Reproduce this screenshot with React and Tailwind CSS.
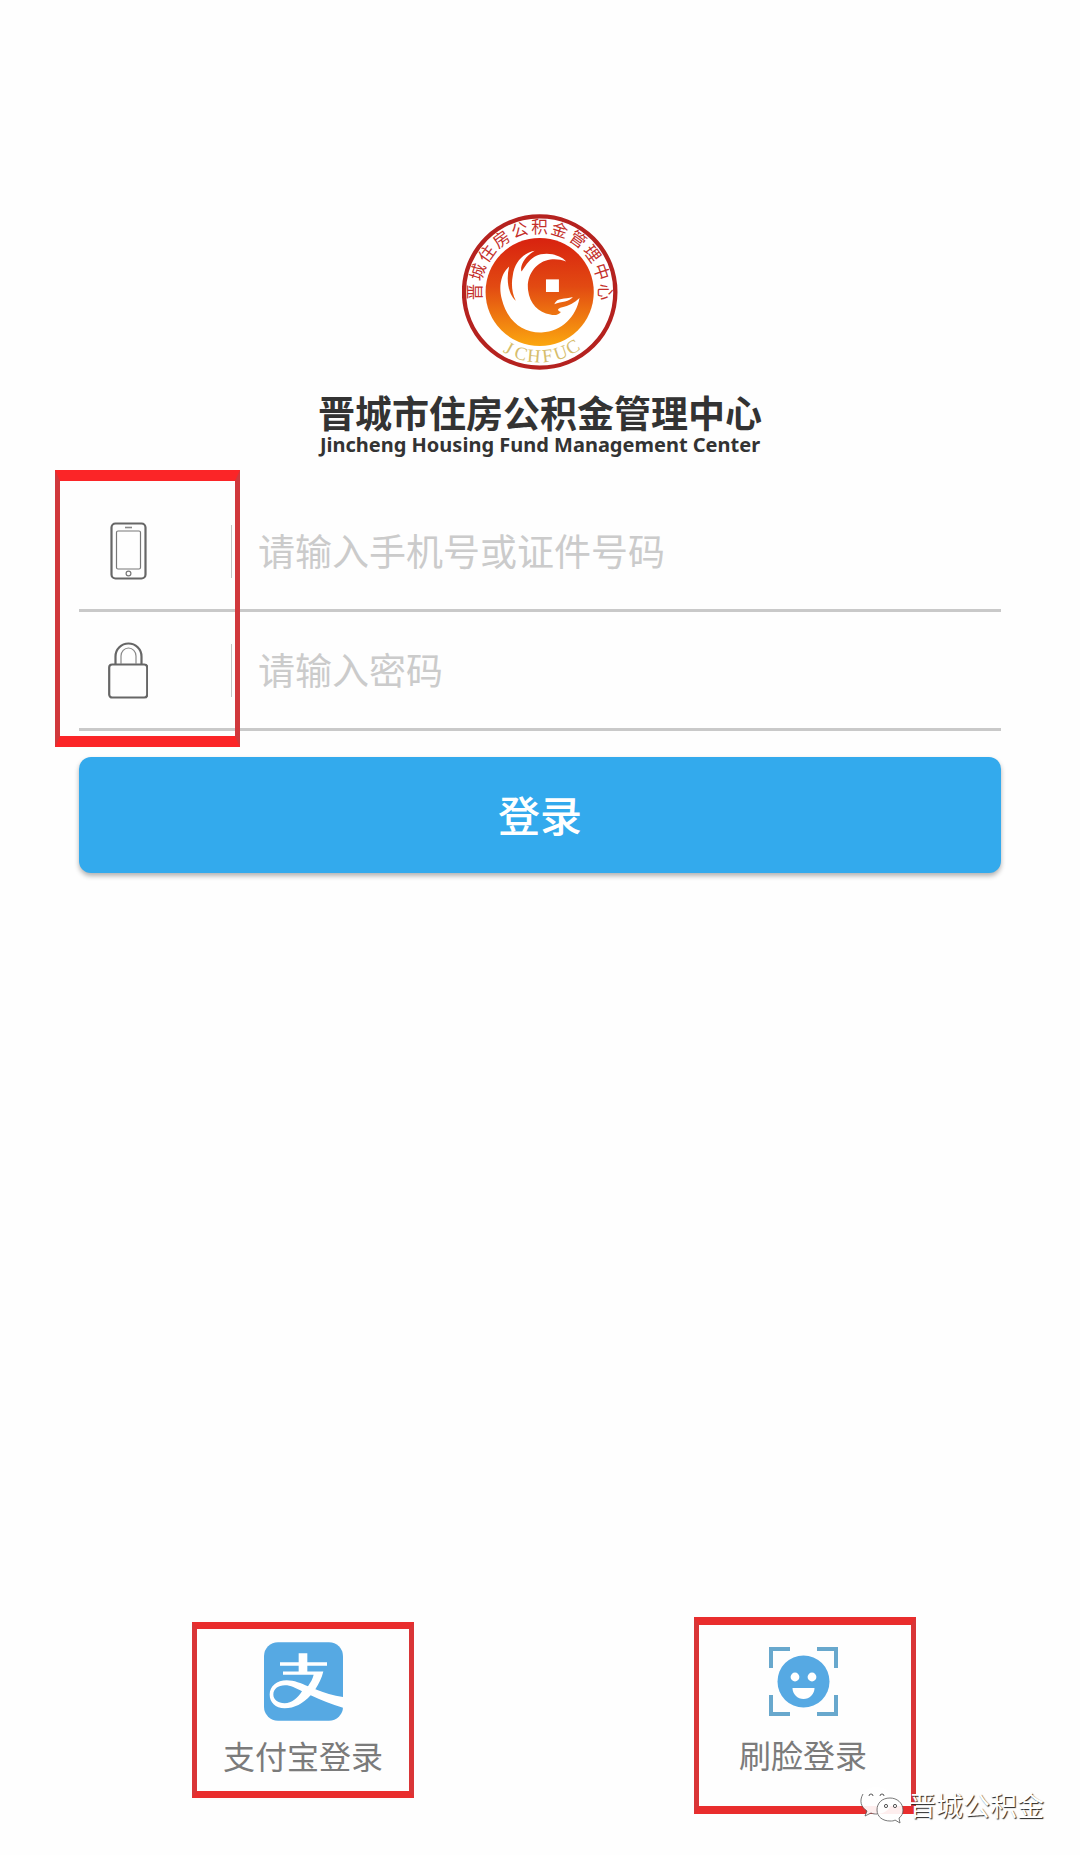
const RING_CHARS = [...'晋城住房公积金管理中心'];
const RING_LETTERS = [...'JCHFUC'];

function CenterLogo() {
  return (
    <svg viewBox="64 41 470 470" className="w-[156px] h-[156px]" role="img" aria-label="晋城市住房公积金管理中心">
      <defs>
        <linearGradient id="sun" x1="0" y1="0" x2="0" y2="1">
          <stop offset="0" stopColor="#d8220f" />
          <stop offset="0.45" stopColor="#e24a12" />
          <stop offset="1" stopColor="#fba70f" />
        </linearGradient>
      </defs>
      <circle cx="298" cy="276" r="228" fill="#fff" stroke="#b5221f" strokeWidth="13" />
      <circle cx="298" cy="276" r="163" fill="url(#sun)" />

      {/* Phoenix */}
      <path
        fill="#fff"
        d="M378 184 C352 156 300 154 276 174 C258 188 250 206 243 214 C238 196 254 168 283 152 C244 160 222 190 217 226 C212 250 214 280 226 302 C204 284 196 240 206 199 C180 222 174 262 184 298 C200 362 246 400 304 398 C366 394 408 350 418 294 C404 308 384 318 366 322 C350 326 350 332 362 336 C356 344 344 348 330 344 C294 338 268 312 263 270 C258 226 286 184 330 178 C346 176 362 178 378 184 Z"
      />
      <path fill="#fff" d="M342 313 C352 290 372 300 398 291 C388 306 364 304 342 313 Z" />
      <rect x="317" y="238" width="39" height="38" fill="#fff" />

      {/* Ring lettering */}
      {RING_CHARS.map((char, i) => (
        <text
          key={i}
          x="298"
          y="98"
          textAnchor="middle"
          fontSize="50"
          fill="#c4302b"
          transform={`rotate(${-90 + i * 18} 298 276)`}
          className="font-['Noto_Sans_CJK_SC',sans-serif]"
        >{char}</text>
      ))}
      {RING_LETTERS.map((char, i) => (
        <text
          key={i}
          x="298"
          y="488"
          textAnchor="middle"
          fontSize="56"
          fill="#d6bd6c"
          transform={`rotate(${29 - i * 12} 298 276)`}
          className="font-['Liberation_Serif',serif]"
        >{char}</text>
      ))}
    </svg>
  );
}

function PhoneIcon() {
  return (
    <svg viewBox="0 0 40 58" className="w-[40px] h-[58px]" fill="none" aria-hidden="true">
      <rect x="3.5" y="1.5" width="34" height="55" rx="4" stroke="#666" strokeWidth="2.2" />
      <rect x="8.5" y="9" width="24" height="38" rx="1.5" stroke="#777" strokeWidth="1.2" />
      <path d="M17 5.5h7" stroke="#888" strokeWidth="1.6" />
      <circle cx="20.5" cy="51.5" r="2.4" stroke="#777" strokeWidth="1.2" />
    </svg>
  );
}

function LockIcon() {
  return (
    <svg viewBox="0 0 40 58" className="w-[40px] h-[58px]" fill="none" aria-hidden="true">
      <rect x="1.2" y="23.5" width="38" height="33" rx="3" stroke="#666" strokeWidth="2.2" />
      <path d="M7.5 23V15.5a13 13 0 0 1 26 0V23" stroke="#666" strokeWidth="2.2" />
      <path d="M13 23v-8a7.5 8 0 0 1 15 0v8" stroke="#888" strokeWidth="1.2" />
    </svg>
  );
}

function AlipayIcon() {
  return (
    <svg viewBox="249 97 237 236" className="w-[79px] h-[79px]" aria-hidden="true">
      <rect x="249" y="97" width="237" height="236" rx="42" fill="#56a9e3" />
      <path fill="#fff" d="M353 130H379V157H438V168H379V185H427C422 206 413 223 403 238C430 249 458 257 487 262V294C452 283 420 270 389 256C366 281 340 295 311 295C283 295 266 278 266 254C266 228 288 211 317 211C340 211 360 220 381 229C389 218 395 208 398 195H306V185H353V168H297V157H353Z" />
      <path fill="#56a9e3" d="M363 244C344 234 329 226 312 226C291 226 277 237 277 254C277 270 291 280 311 280C332 280 350 264 363 244Z" />
    </svg>
  );
}

function FaceIcon() {
  return (
    <svg viewBox="0 0 69 69" className="w-[69px] h-[69px]" aria-hidden="true">
      <path d="M2 21V2H21M48 2H67V21M67 48V67H48M21 67H2V48" fill="none" stroke="#68a8cd" strokeWidth="4" />
      <circle cx="34.5" cy="34.5" r="26" fill="#56a9e3" />
      <circle cx="26" cy="30" r="4.4" fill="#fff" />
      <circle cx="43" cy="30" r="4.4" fill="#fff" />
      <path d="M23.5 41H45.5A11 11 0 0 1 23.5 41Z" fill="#fff" />
    </svg>
  );
}

function WechatIcon() {
  return (
    <svg viewBox="0 0 44 38" className="w-[44px] h-[38px]" aria-hidden="true">
      <path
        d="M16 1C7 1 1 7 1 14c0 5 2 8 6 11l-2 5 6-3c2 1 4 1 6 1 8 0 15-6 15-14S25 1 16 1Z"
        fill="#fff" fillOpacity="0.92"
      />
      <path d="M3 8C-1 15 1 21 7 25l-2 5 6-3c2 1 4 1 6 1" fill="none" stroke="#555" strokeWidth="0.8" />
      <path
        d="M30 12c-8 0-13 5-13 12s6 11 13 11c2 0 4 0 5-1l5 3-1-5c3-2 4-5 4-8 0-7-6-12-13-12Z"
        fill="#fff" fillOpacity="0.92" stroke="#555" strokeWidth="0.8"
      />
      <g fill="#fff" stroke="#444" strokeWidth="0.9">
        <path d="M9 10a2 2 0 0 1 4 0M20 10a2 2 0 0 1 4 0" />
        <circle cx="26" cy="20" r="1.6" />
        <circle cx="35" cy="20" r="1.6" />
      </g>
    </svg>
  );
}

function Field({ id, type, label, placeholder, icon }) {
  return (
    <div className="flex items-center h-[119px] border-b-3 border-[#c9c9c9]">
      <label
        htmlFor={id}
        aria-label={label}
        className="flex items-center shrink-0 w-[153px] h-[53px] pl-[29px] border-r border-[#c4c4c4]"
      >
        {icon}
      </label>
      <input
        id={id}
        type={type}
        placeholder={placeholder}
        className="flex-1 min-w-0 h-full pl-[26px] pb-[2px] text-[37px] text-gray-700
                   placeholder:text-[#cbcbcb] outline-none"
      />
    </div>
  );
}

export default function App() {
  return (
    <main
      className="relative flex flex-col min-h-screen bg-[#fefefe]
                 font-['Noto_Sans_CJK_SC',sans-serif]"
    >
      <header className="flex flex-col items-center pt-[214px] text-[#333]">
        <CenterLogo />
        <h1 className="mt-[21px] text-[37px] leading-[42px] font-bold">晋城市住房公积金管理中心</h1>
        <p className="text-[20px] leading-6 font-bold font-['Noto_Sans',sans-serif]">
          Jincheng Housing Fund Management Center
        </p>
      </header>

      <form className="mt-9 px-[79px]" onSubmit={e => e.preventDefault()}>
        <div className="relative">
          <Field id="account" type="text" label="手机号或证件号码" placeholder="请输入手机号或证件号码" icon={<PhoneIcon />} />
          <Field id="password" type="password" label="密码" placeholder="请输入密码" icon={<LockIcon />} />
          {/* Highlight over the icon column */}
          <div
            className="absolute -left-6 -top-[23px] w-[185px] h-[277px] pointer-events-none
                       border-x-5 border-y-11 border-x-[#d0383c] border-y-[#fb2527]"
          />
        </div>
        <button
          type="submit"
          className="block w-full h-[116px] mt-[26px] pb-1 rounded-xl bg-[#33aaed] text-white
                     text-[42px] font-medium shadow-[0_3px_5px_rgba(0,0,0,0.3)]"
        >登录</button>
      </form>

      {/* Other ways to sign in */}
      <div className="flex items-start justify-between mt-auto pl-[192px] pr-[164px] pb-[41px] text-[32px] leading-10 text-[#7b7b7b]">
        <button
          type="button"
          className="flex flex-col items-center w-[222px] mt-[5px] pt-[13px] pb-4
                     border-x-5 border-y-7 border-x-[#d93537] border-y-[#e92d2d]"
        >
          <AlipayIcon />
          <span className="mt-[14px]">支付宝登录</span>
        </button>
        <button
          type="button"
          className="flex flex-col items-center w-[222px] pt-[22px] pb-8 pr-1
                     border-x-5 border-y-8 border-x-[#d93537] border-y-[#e92d2d]"
        >
          <FaceIcon />
          <span className="mt-[18px]">刷脸登录</span>
        </button>
      </div>

      {/* Account watermark */}
      <div className="absolute right-[36px] bottom-[30px] flex items-center gap-[5px]">
        <WechatIcon />
        <span className="text-[27px] leading-10 text-white [text-shadow:1px_1px_1px_#222]">晋城公积金</span>
      </div>
    </main>
  );
}
